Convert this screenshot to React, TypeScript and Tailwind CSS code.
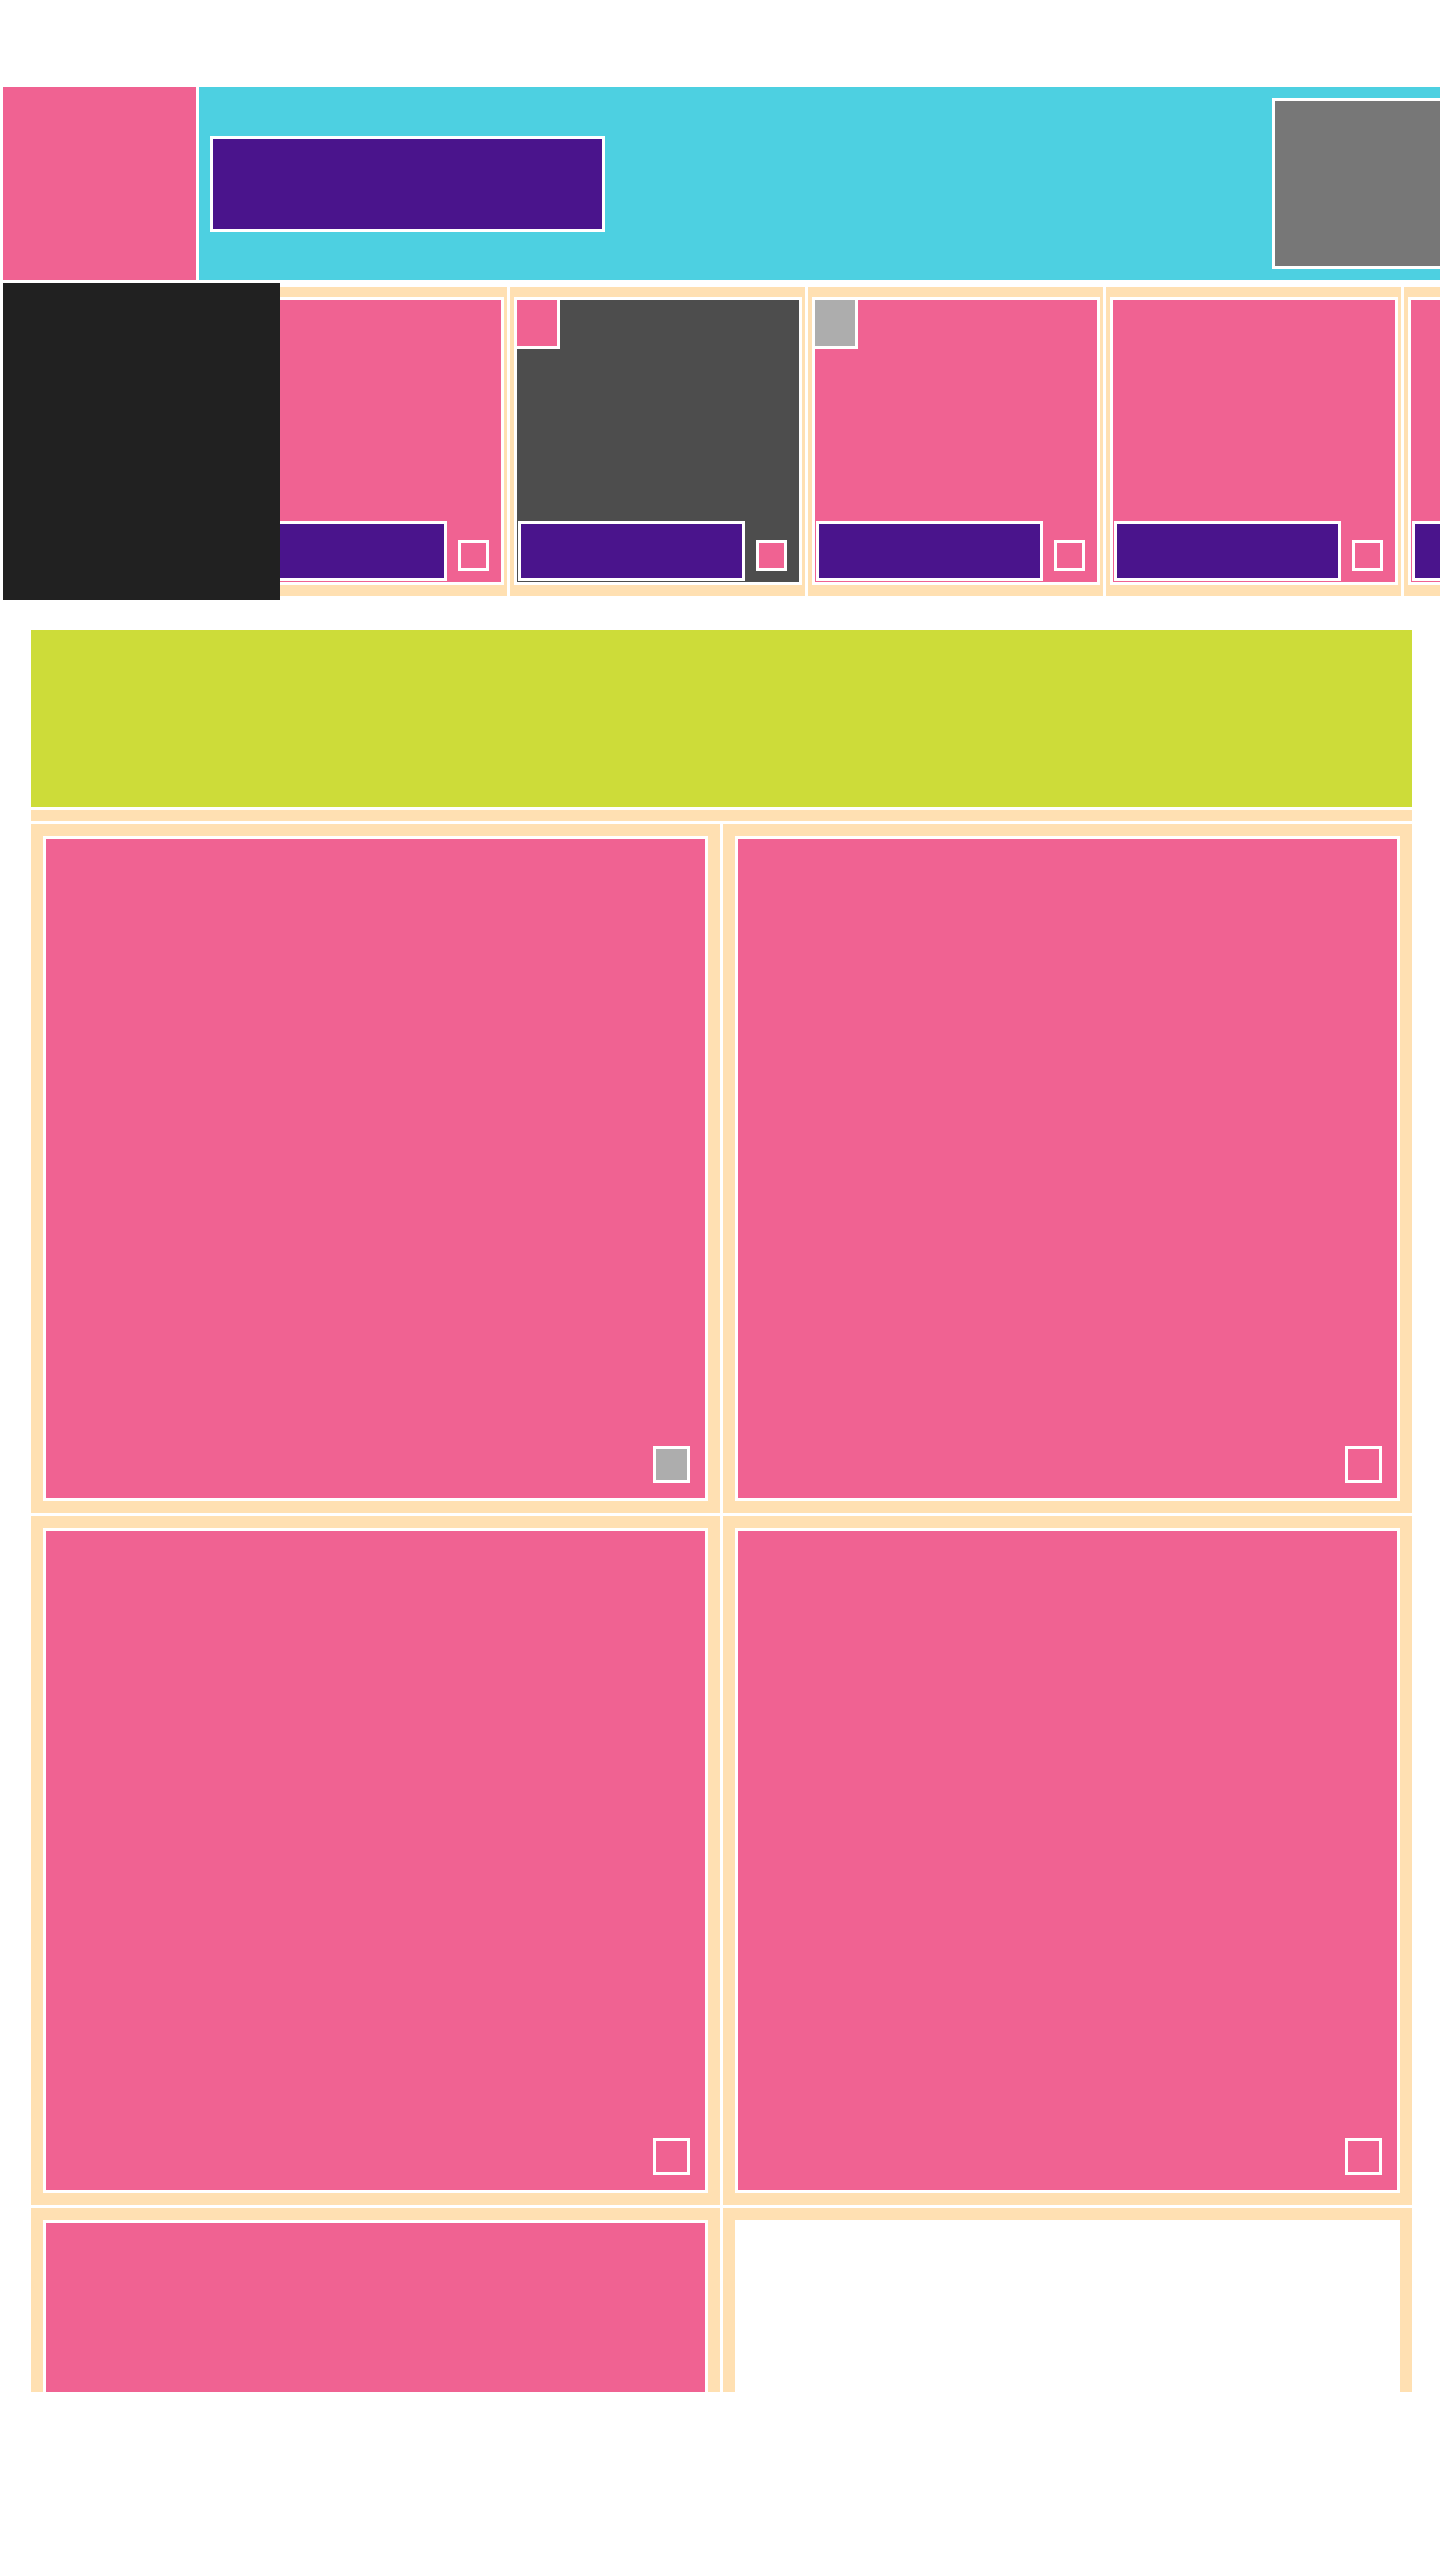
const cards = [
  { fill: "bg-[#f06292]", badge: "" },
  { fill: "bg-[#4d4d4d]", badge: "bg-[#f06292]" },
  { fill: "bg-[#f06292]", badge: "bg-[#adadad]" },
  { fill: "bg-[#f06292]", badge: "" },
  { fill: "bg-[#f06292]", badge: "" },
];

const tiles = [
  { fill: "bg-[#f06292]", mark: "bg-[#adadad]" },
  { fill: "bg-[#f06292]", mark: "bg-[#f06292]" },
  { fill: "bg-[#f06292]", mark: "bg-[#f06292]" },
  { fill: "bg-[#f06292]", mark: "bg-[#f06292]" },
  { fill: "bg-[#f06292]", mark: "bg-[#f06292]" },
  { fill: "bg-white", mark: "bg-white" },
];

function Card({ fill, badge }: { fill: string; badge: string }) {
  return (
    <div className="flex h-[309px] w-[295px] shrink-0 justify-center bg-[#ffe0b2] pt-[10px]">
      <div className={`relative flex h-[288px] w-[288px] flex-col border-[3px] border-white ${fill}`}>
        {badge && (
          <div className={`absolute -left-[3px] -top-[3px] h-[52px] w-[46px] border-[3px] border-white ${badge}`} />
        )}
        <div className="mt-auto flex items-end pb-[1px] pl-[1px]">
          <div className="h-[60px] w-[227px] border-[3px] border-white bg-[#4a148c]" />
          <div className="mb-[10px] ml-[11px] h-[31px] w-[31px] border-[3px] border-white bg-[#f06292]" />
        </div>
      </div>
    </div>
  );
}

export default function App() {
  return (
    <div className="min-h-[2560px] w-[1440px] overflow-hidden bg-white pt-[87px]">

      {/* HEADER */}
      <header className="flex h-[193px] gap-[3px] pl-[3px]">
        <div className="w-[193px] shrink-0 bg-[#f06292]" />
        <div className="flex flex-1 items-center justify-between overflow-hidden bg-[#4dd0e1] pl-[11px]">
          <div className="h-[96px] w-[395px] border-[3px] border-white bg-[#4a148c]" />
          <div className="mr-[-40px] h-[171px] w-[208px] shrink-0 border-[3px] border-white bg-[#777777]" />
        </div>
      </header>

      {/* STRIP */}
      <div className="mt-[3px] flex h-[317px] pl-[3px]">
        <div className="w-[277px] shrink-0 bg-[#212121]" />
        <div className="flex flex-1 items-center overflow-hidden">
          <div className="ml-[-68px] flex gap-[3px]">
            {cards.map((c, i) => (
              <Card key={i} fill={c.fill} badge={c.badge} />
            ))}
          </div>
        </div>
      </div>

      {/* CONTENT */}
      <div className="ml-[31px] mt-[30px] flex w-[1381px] flex-col gap-[3px]">
        <div className="h-[177px] bg-[#cddc39]" />
        <div className="h-[11px] bg-[#ffe0b2]" />
        <div className="h-[1568px] overflow-hidden">
          <div className="grid grid-cols-2 gap-[3px]">
            {tiles.map((t, i) => (
              <div key={i} className="h-[689px] bg-[#ffe0b2] p-[12px]">
                <div className={`flex h-full items-end justify-end border-[3px] border-white p-[15px] ${t.fill}`}>
                  <div className={`h-[37px] w-[37px] border-[3px] border-white ${t.mark}`} />
                </div>
              </div>
            ))}
          </div>
        </div>
      </div>

    </div>
  );
}
